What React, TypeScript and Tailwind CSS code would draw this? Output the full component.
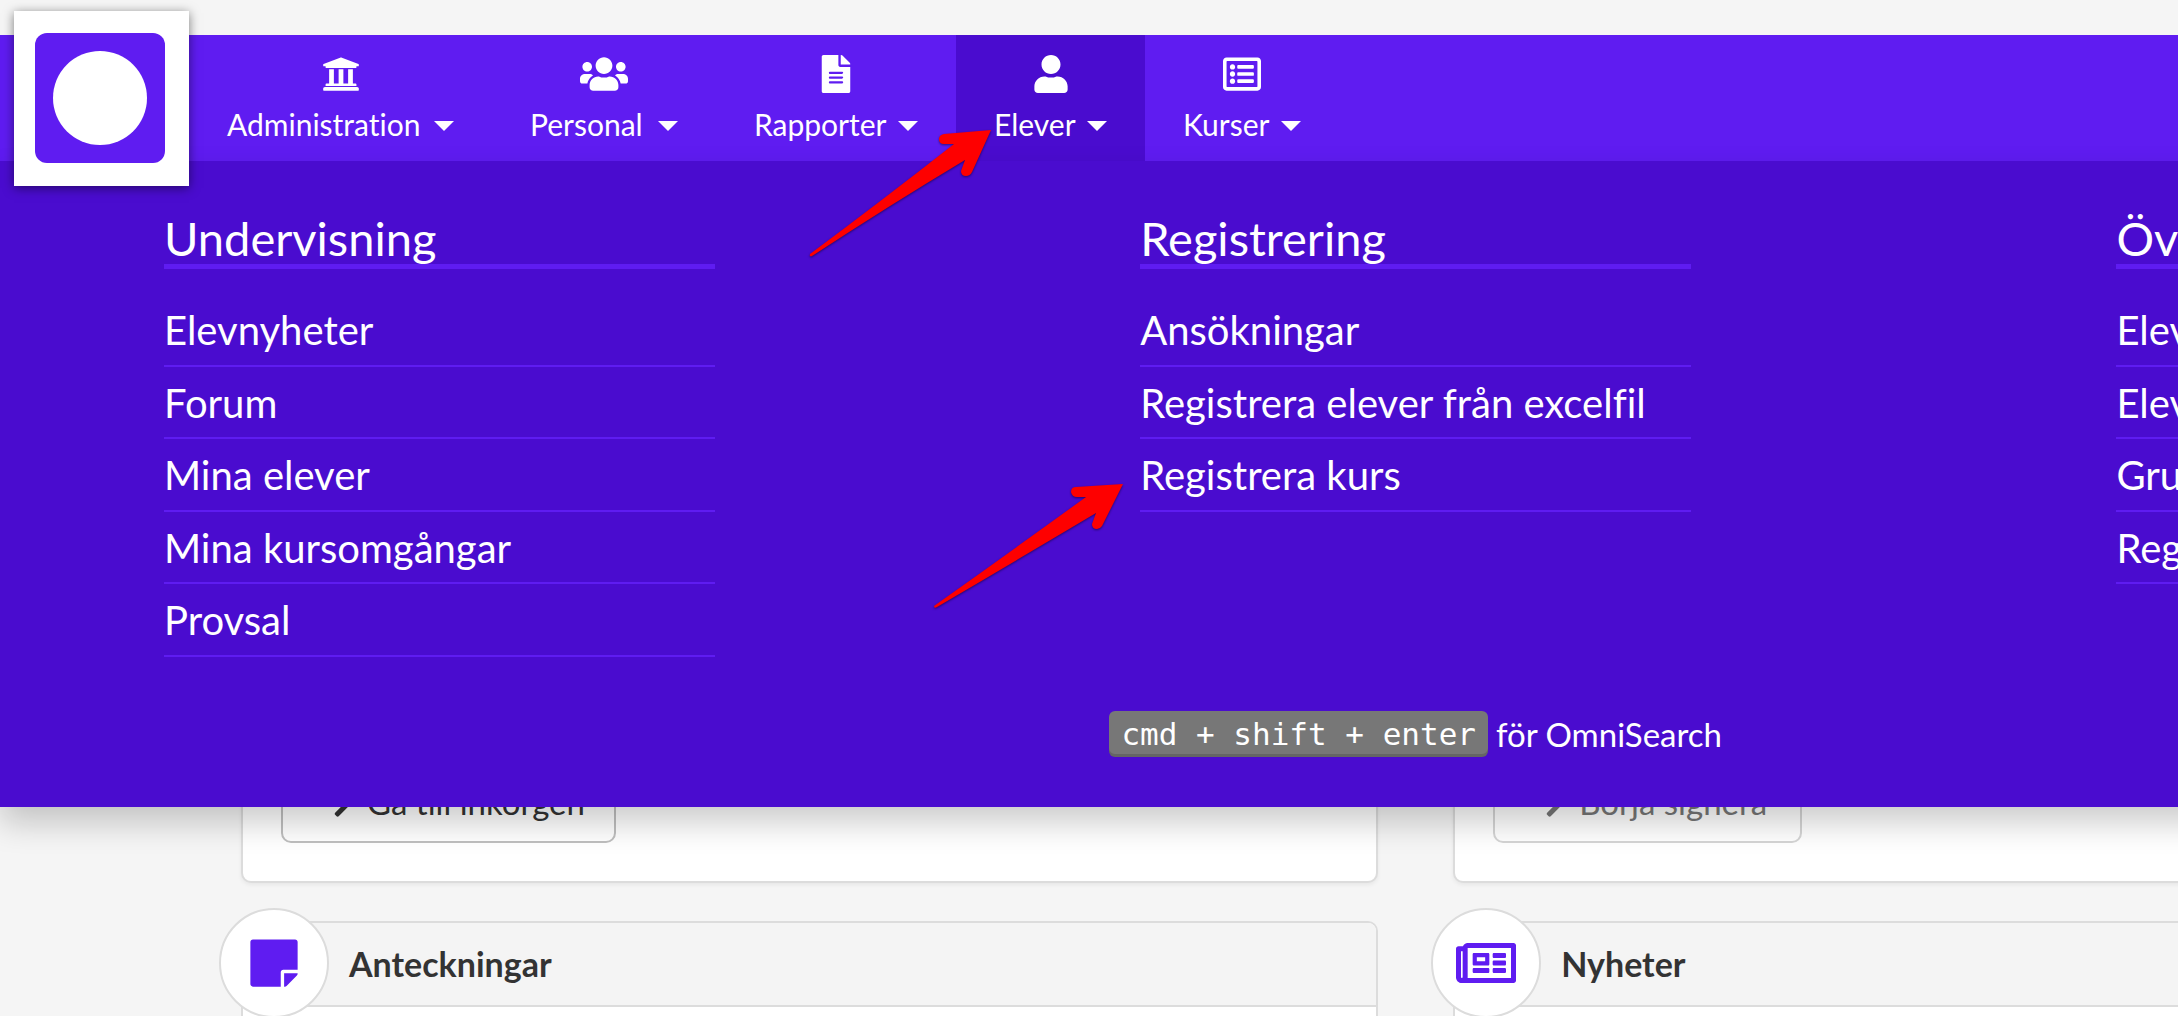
import type { ReactNode } from "react";
import {
  FaChevronRight,
  FaFileAlt,
  FaRegListAlt,
  FaRegNewspaper,
  FaStickyNote,
  FaUniversity,
  FaUser,
  FaUsers,
} from "react-icons/fa";

type NavEntry = { label: string; icon: ReactNode; width: string; active?: boolean };

const navEntries: NavEntry[] = [
  { label: "Administration", icon: <FaUniversity size={38} />, width: "w-[303px]" },
  { label: "Personal", icon: <FaUsers size={48} />, width: "w-[224px]" },
  { label: "Rapporter", icon: <FaFileAlt size={38} />, width: "w-[240px]" },
  { label: "Elever", icon: <FaUser size={38} />, width: "w-[189px]", active: true },
  { label: "Kurser", icon: <FaRegListAlt size={38} />, width: "w-[194px]" },
];

const menuColumns = [
  {
    title: "Undervisning",
    links: ["Elevnyheter", "Forum", "Mina elever", "Mina kursomgångar", "Provsal"],
  },
  {
    title: "Registrering",
    links: ["Ansökningar", "Registrera elever från excelfil", "Registrera kurs"],
  },
  { title: "Övr", links: ["Elev", "Elev", "Gru", "Reg"] },
];

function Logo() {
  return (
    <a
      href="#"
      aria-label="Start"
      className="absolute left-[14px] top-[11px] z-30 flex size-[175px] items-start bg-white pl-[21px] pt-[22px] shadow-[0_2px_10px_rgba(0,0,0,0.5)]"
    >
      <span className="flex size-[130px] items-center justify-center rounded-xl bg-[#5f1cf1]">
        <span className="size-[94px] rounded-full bg-white" />
      </span>
    </a>
  );
}

function NavBar() {
  return (
    <nav className="flex h-[126px] bg-[#5f1cf1] pl-[189px] text-white">
      {navEntries.map((entry) => (
        <button
          key={entry.label}
          type="button"
          className={`flex shrink-0 flex-col items-center px-[38px] pt-5 ${entry.width} ${
            entry.active ? "bg-[#4a0ccf]" : ""
          }`}
        >
          <span className="flex h-[38px] items-center">{entry.icon}</span>
          <span className="mt-3 flex w-full items-center justify-between whitespace-nowrap text-[30px] leading-[38px]">
            {entry.label}
            <svg viewBox="0 0 20 10" className="mt-1 h-[10px] w-5" fill="currentColor" aria-hidden="true">
              <path d="M0 0h20L10 10z" />
            </svg>
          </span>
        </button>
      ))}
    </nav>
  );
}

function MegaMenu() {
  return (
    <div className="absolute left-0 top-full z-20 w-[130%] bg-[#4a0ccf] pb-[50px] pt-[44px] text-white shadow-[0_16px_30px_rgba(0,0,0,0.2)]">
      <div className="flex min-h-[506px] items-start justify-between px-[164px]">
        {menuColumns.map((column) => (
          <section key={column.title} className="w-[551px]">
            <h2 className="h-[64px] border-b-[5px] border-[#5f1cf1] text-[47px] leading-[67px]">
              {column.title}
            </h2>
            <ul className="pt-[25px]">
              {column.links.map((link, index) => (
                <li key={index} className="h-[72px] border-b-2 border-[#5f1cf1] odd:h-[73px]">
                  <a href="#" className="block whitespace-nowrap text-[40px] leading-[73px]">
                    {link}
                  </a>
                </li>
              ))}
            </ul>
          </section>
        ))}
      </div>
      <p className="flex items-center justify-center gap-2 text-[33px] leading-[46px]">
        <kbd className="rounded-md bg-[#777] px-3 font-['DejaVu_Sans_Mono',monospace] text-[31px] leading-[46px] shadow-[inset_0_-3px_0_rgba(0,0,0,0.15)]">
          cmd + shift + enter
        </kbd>
        för OmniSearch
      </p>
    </div>
  );
}

function ActionCard({ label, muted }: { label: string; muted?: boolean }) {
  return (
    <section className="flex min-h-[680px] items-end rounded-[10px] border-2 border-[#dcdcdc] bg-white px-[38px] pb-[38px] shadow-[0_2px_4px_rgba(0,0,0,0.06)]">
      <button
        type="button"
        className={`flex h-[76px] items-center gap-2 whitespace-nowrap rounded-[10px] border-2 pb-1 pl-[44px] text-[33px] ${
          muted ? "w-[309px] border-[#d5d5d5] text-[#777]" : "w-[335px] border-[#bfbfbf] text-[#333]"
        }`}
      >
        <FaChevronRight size={32} className="shrink-0" />
        {label}
      </button>
    </section>
  );
}

function FeedCard({ title, icon }: { title: string; icon: ReactNode }) {
  return (
    <section className="relative min-h-[240px] rounded-[10px] border-2 border-[#dcdcdc] bg-white">
      <header className="flex h-[84px] items-center rounded-t-lg border-b-2 border-[#dcdcdc] bg-[#f4f4f4] pl-[106px]">
        <span className="absolute -left-6 -top-[15px] flex size-[110px] items-center justify-center rounded-full border-2 border-[#dcdcdc] bg-white text-[#5f1cf1]">
          {icon}
        </span>
        <h3 className="text-[34px] font-bold leading-10 text-[#333]">{title}</h3>
      </header>
    </section>
  );
}

/** Red pointers laid over the page to mark the steps. */
function Pointers() {
  return (
    <svg
      className="pointer-events-none absolute left-[800px] top-[120px] z-40 h-[500px] w-[340px] drop-shadow-[0_1px_1px_rgba(0,0,0,0.5)]"
      viewBox="800 120 340 500"
      fill="#fe0000"
      aria-hidden="true"
    >
      <path d="M991 130 L944 134 Q939 135 939 139 Q939 144 944 144 L954 144 Q880 202 810 254 Q809 257 812 256 Q890 205 965 160 L961 171 Q961 176 966 176 Q970 176 972 172 Z" />
      <path d="M1123 484 L1076 487 Q1071 487 1071 492 Q1072 497 1077 497 L1086 497 Q1010 552 934 606 Q934 609 937 607 Q1017 560 1096 513 L1092 524 Q1092 529 1097 529 Q1100 529 1102 526 Z" />
    </svg>
  );
}

export default function App() {
  return (
    <div className="relative h-screen overflow-hidden bg-[#f5f5f5] pt-[35px] font-['Lato','Open_Sans',sans-serif] [font-variant-ligatures:none]">
      <Logo />
      <header className="relative z-20">
        <NavBar />
        <MegaMenu />
      </header>
      <main className="grid w-[130%] grid-cols-2 gap-x-[75px] gap-y-[38px] px-[241px] pt-[42px]">
        <ActionCard label="Gå till inkorgen" />
        <ActionCard label="Börja signera" muted />
        <FeedCard title="Anteckningar" icon={<FaStickyNote size={54} />} />
        <FeedCard title="Nyheter" icon={<FaRegNewspaper size={60} />} />
      </main>
      <Pointers />
    </div>
  );
}
